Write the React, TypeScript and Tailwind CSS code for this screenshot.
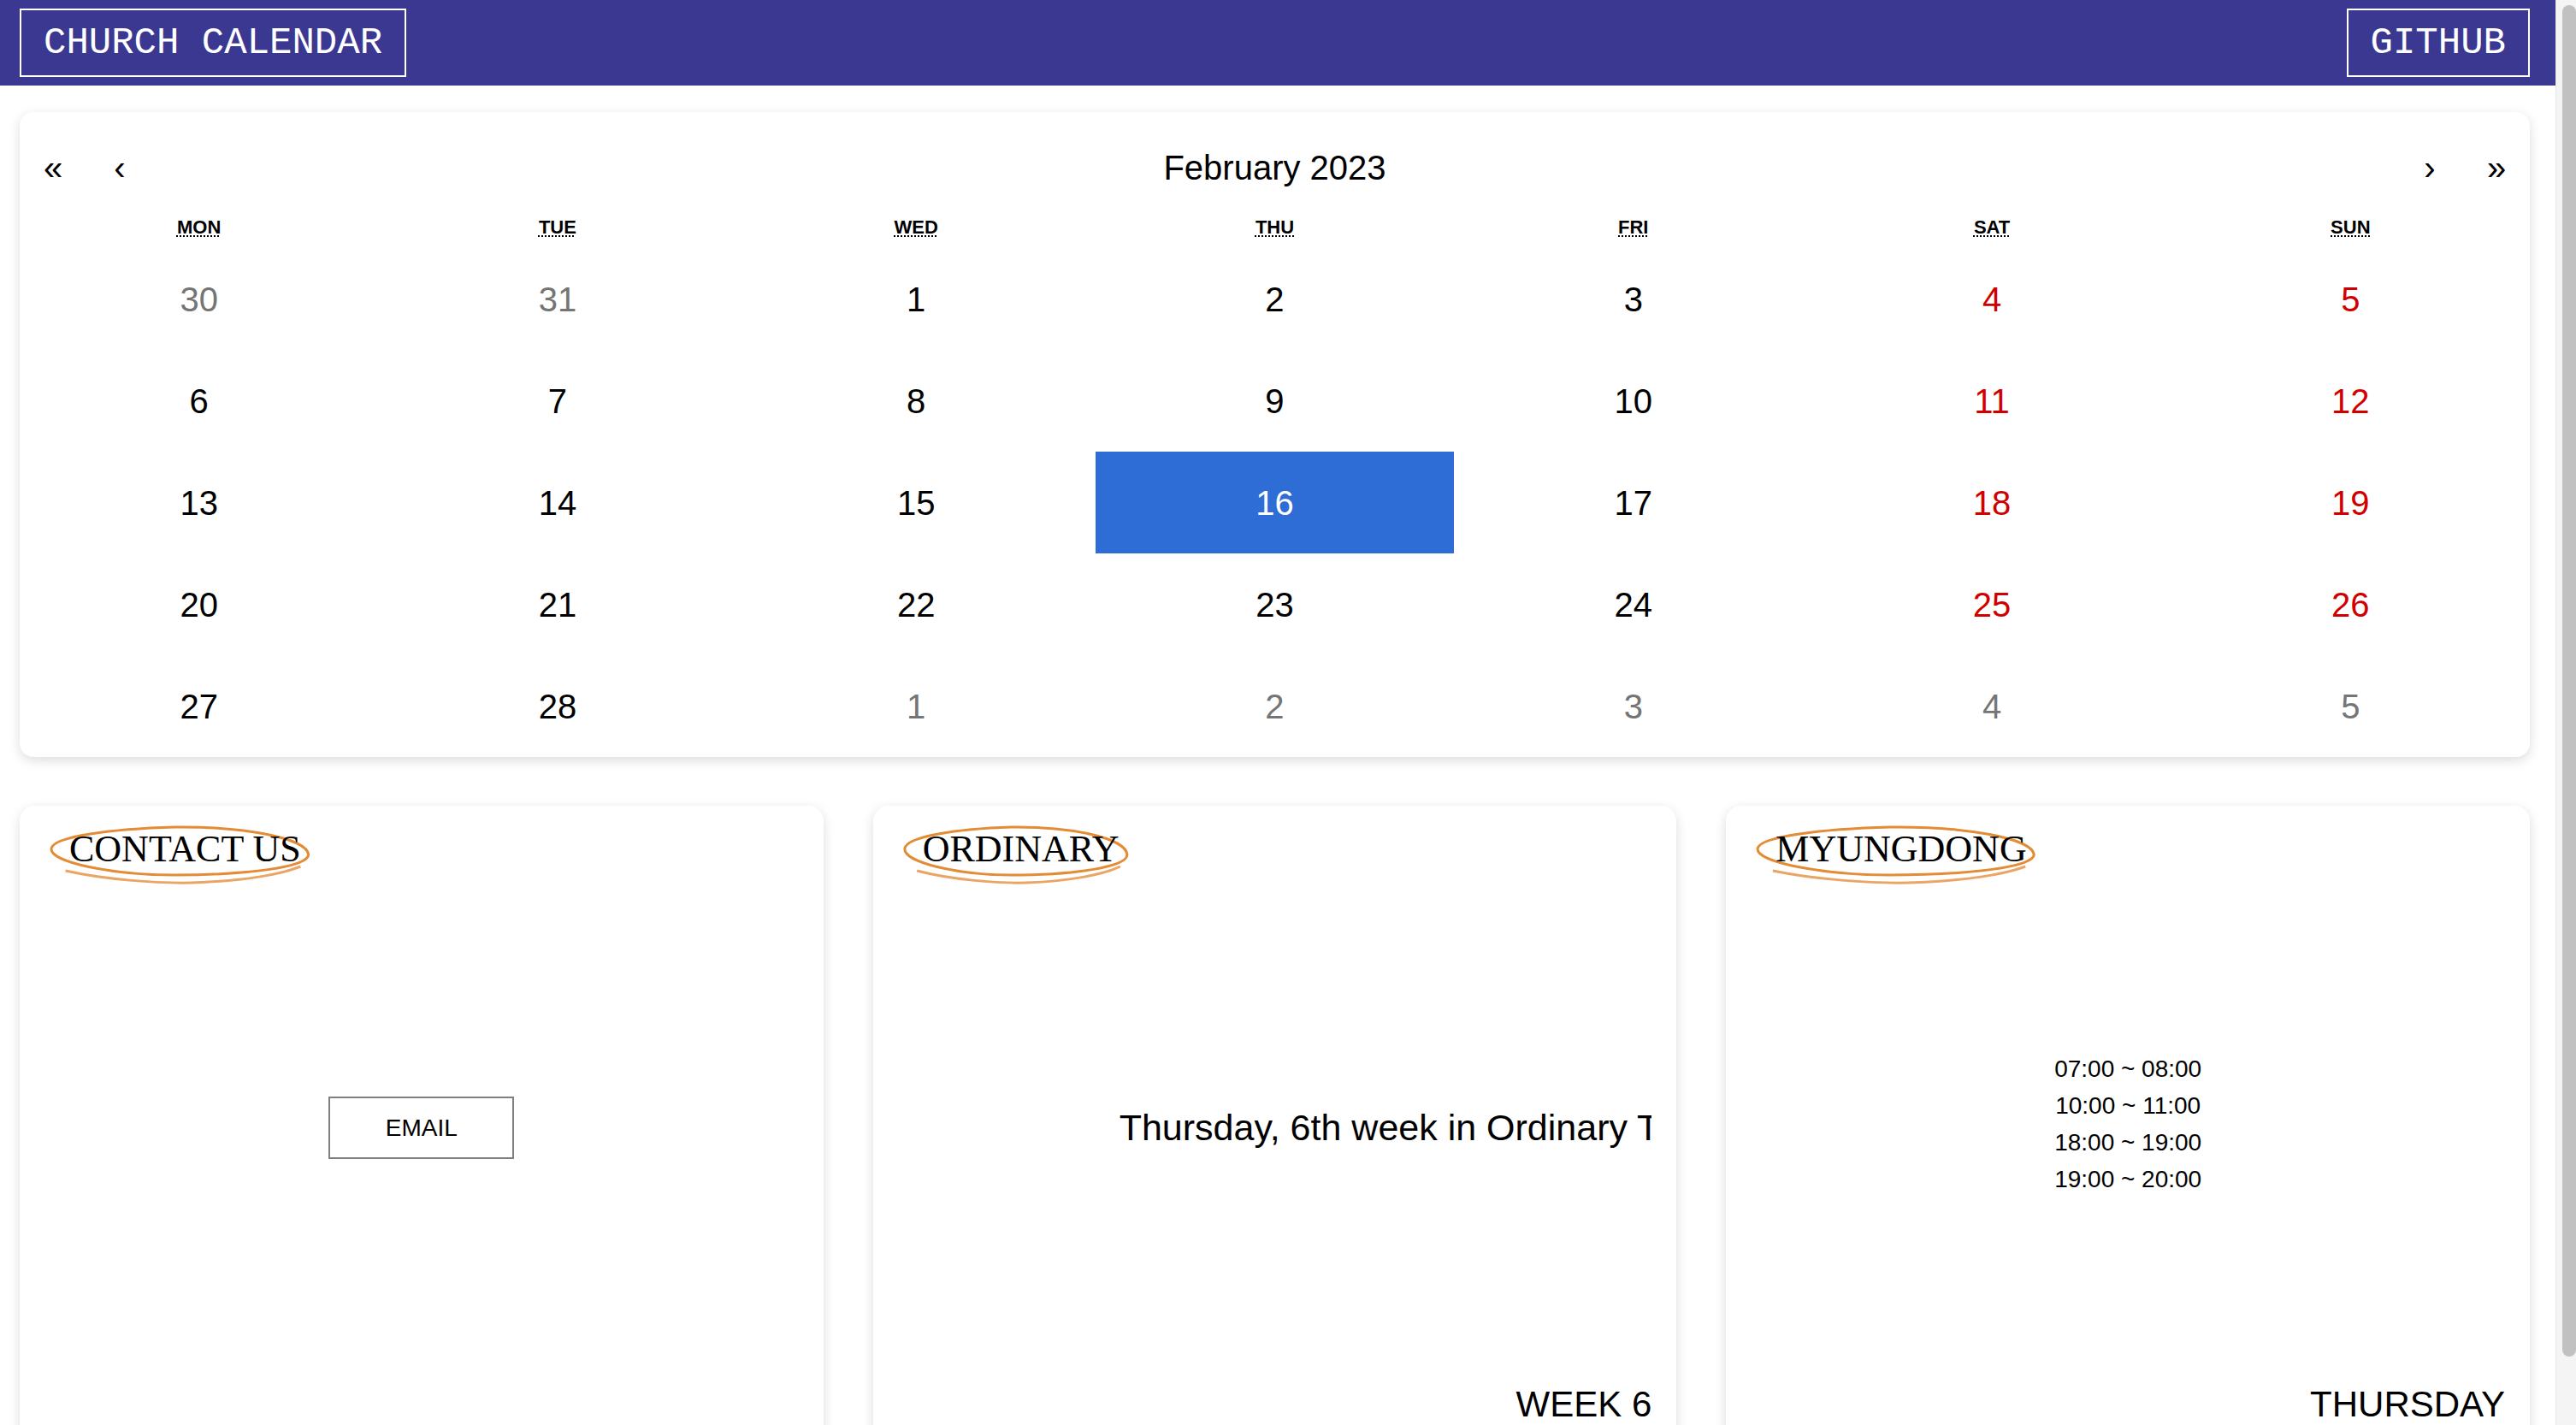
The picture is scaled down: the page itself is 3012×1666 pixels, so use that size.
import React from 'react';

const weekdays = ['MON', 'TUE', 'WED', 'THU', 'FRI', 'SAT', 'SUN'];

// [day, outside current month]
const weeks: [number, boolean][][] = [
  [[30, true], [31, true], [1, false], [2, false], [3, false], [4, false], [5, false]],
  [[6, false], [7, false], [8, false], [9, false], [10, false], [11, false], [12, false]],
  [[13, false], [14, false], [15, false], [16, false], [17, false], [18, false], [19, false]],
  [[20, false], [21, false], [22, false], [23, false], [24, false], [25, false], [26, false]],
  [[27, false], [28, false], [1, true], [2, true], [3, true], [4, true], [5, true]],
];

const times = ['07:00 ~ 08:00', '10:00 ~ 11:00', '18:00 ~ 19:00', '19:00 ~ 20:00'];

function Scribble() {
  return (
    <svg
      className="absolute left-[-22px] top-[-5px] w-[calc(100%+32px)] h-[calc(100%+22px)] overflow-visible pointer-events-none"
      viewBox="0 0 293 66"
      preserveAspectRatio="none"
      fill="none"
    >
      <path
        d="M 1 26 C 3 12, 70 3, 140 1 C 220 0, 290 14, 292 33 C 293 48, 220 57, 140 57 C 70 57, -1 42, 1 26"
        stroke="#e38b35"
        strokeWidth="3"
        vectorEffect="non-scaling-stroke"
      />
      <path
        d="M 17 52 C 60 62, 120 67, 160 66 C 220 64, 262 56, 283 47"
        stroke="#eaa565"
        strokeWidth="3"
        vectorEffect="non-scaling-stroke"
      />
    </svg>
  );
}

function Card({ title, bottom, children }: { title: string; bottom?: string; children: React.ReactNode }) {
  return (
    <div className="h-[780px] rounded-[18px] bg-white shadow-[0_4px_14px_rgba(0,0,0,0.14)] flex flex-col pt-[29px] px-[29px] pb-[56px] overflow-hidden">
      <div className="ml-[29px] self-start relative font-['Liberation_Serif',serif] text-[44px] leading-none text-black">
        <Scribble />
        <span className="relative">{title}</span>
      </div>
      <div className="flex-1 flex items-center justify-center overflow-hidden pt-[4px]">{children}</div>
      <div className="h-[48px] text-right text-[42px] leading-[48px] text-black">{bottom}</div>
    </div>
  );
}

export default function App() {
  return (
    <div className="flex h-screen overflow-hidden bg-white font-['Liberation_Sans',Arial,sans-serif]">
      <div className="flex-1 min-w-0 overflow-hidden">
        {/* Top bar */}
        <header className="h-[100px] bg-[#3b3891] flex items-center justify-between pl-[23px] pr-[30px]">
          <button className="h-[80px] px-[26px] border-2 border-white text-white font-['Liberation_Mono',monospace] text-[44px] leading-none">
            CHURCH CALENDAR
          </button>
          <button className="h-[80px] px-[26px] border-2 border-white text-white font-['Liberation_Mono',monospace] text-[44px] leading-none">
            GITHUB
          </button>
        </header>

        <main className="pl-[23px] pr-[30px] pt-[31px] pb-[30px]">
          {/* Calendar */}
          <div className="rounded-[16px] bg-white shadow-[0_4px_14px_rgba(0,0,0,0.14)] pt-[21px] overflow-hidden">
            <div className="h-[88px] flex items-center text-black">
              <button className="w-[78px] h-full text-[40px] leading-none">«</button>
              <button className="w-[78px] h-full text-[40px] leading-none">‹</button>
              <div className="flex-1 text-center text-[40px]">February 2023</div>
              <button className="w-[78px] h-full text-[40px] leading-none">›</button>
              <button className="w-[78px] h-full text-[40px] leading-none">»</button>
            </div>
            <div className="grid grid-cols-7 h-[50px] items-center">
              {weekdays.map((d) => (
                <div key={d} className="text-center text-[22px] font-bold">
                  <abbr className="underline decoration-dotted decoration-[2px] underline-offset-[3px]">{d}</abbr>
                </div>
              ))}
            </div>
            <div className="grid grid-cols-7">
              {weeks.flatMap((w, wi) =>
                w.map(([n, out], ci) => {
                  const selected = !out && n === 16;
                  const color = selected
                    ? 'bg-[#2e6dd6] text-white'
                    : out
                    ? 'text-[#757575]'
                    : ci >= 5
                    ? 'text-[#d10000]'
                    : 'text-black';
                  return (
                    <div key={`${wi}-${ci}`} className={`h-[119px] flex items-center justify-center text-[40px] ${color}`}>
                      {n}
                    </div>
                  );
                })
              )}
            </div>
          </div>

          {/* Info cards */}
          <div className="grid grid-cols-3 gap-x-[58px] mt-[57px]">
            <Card title="CONTACT US">
              <button className="w-[217px] h-[73px] border-2 border-[#7f7f7f] bg-white text-[28px] text-black">EMAIL</button>
            </Card>
            <Card title="ORDINARY" bottom="WEEK 6">
              <div className="w-full overflow-hidden">
                <div className="whitespace-nowrap pl-[259px] text-[43px] text-black">Thursday, 6th week in Ordinary Time</div>
              </div>
            </Card>
            <Card title="MYUNGDONG" bottom="THURSDAY">
              <div className="text-center text-[28px] leading-[43px] text-black -mt-[10px]">
                {times.map((t) => (
                  <div key={t}>{t}</div>
                ))}
              </div>
            </Card>
          </div>
        </main>
      </div>

      {/* Scrollbar */}
      <div className="w-[24px] shrink-0 bg-[#f4f4f4] border-l border-[#e4e4e4] pt-[6px] pl-[7px]">
        <div className="h-[1580px] w-[16px] rounded-full bg-[#c1c1c1]" />
      </div>
    </div>
  );
}
